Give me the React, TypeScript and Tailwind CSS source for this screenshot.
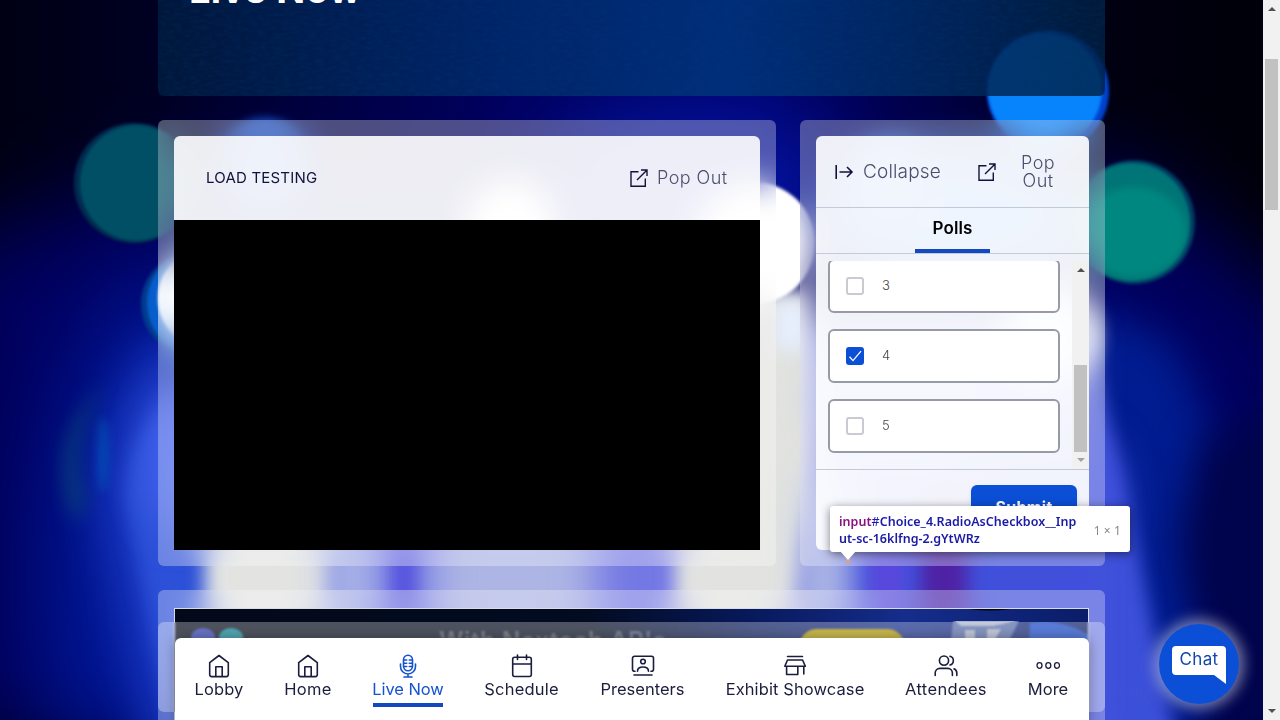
import type { ReactNode } from "react";

function Blur({ id, amount }: { id: string; amount: number }) {
  return (
    <filter id={id} filterUnits="userSpaceOnUse" x="-200" y="-200" width="1700" height="1200" colorInterpolationFilters="sRGB">
      <feGaussianBlur stdDeviation={amount} />
    </filter>
  );
}

function Backdrop() {
  return (
    <svg className="absolute inset-0 h-[720px] w-[1263px]" viewBox="0 0 1263 720" aria-hidden="true">
      <defs>
        <linearGradient id="base" x1="0" x2="1" y1="0" y2="0">
          <stop offset="0" stopColor="#000014" />
          <stop offset="0.12" stopColor="#000022" />
          <stop offset="0.26" stopColor="#000042" />
          <stop offset="0.4" stopColor="#000260" />
          <stop offset="0.6" stopColor="#000470" />
          <stop offset="0.75" stopColor="#000042" />
          <stop offset="0.88" stopColor="#000010" />
          <stop offset="1" stopColor="#00000a" />
        </linearGradient>
        <Blur id="b1" amount={1.5} />
        <Blur id="b4" amount={4} />
        <Blur id="b8" amount={9} />
        <Blur id="b20" amount={20} />
        <Blur id="b40" amount={42} />
      </defs>
      <rect width="1263" height="720" fill="url(#base)" />
      <path d="M-60 740V250L180 170H1130L1330 330V740Z" fill="#000060" filter="url(#b40)" />
      <path d="M60 740Q10 460 120 290L420 240V740Z" fill="#001796" filter="url(#b40)" />
      <ellipse cx="690" cy="190" rx="150" ry="80" fill="#0414a0" filter="url(#b40)" />
      <ellipse cx="960" cy="215" rx="120" ry="60" fill="#0a60e8" filter="url(#b20)" />
      <path d="M1080 300L1170 340L1215 430L1210 740H1080Z" fill="#001c90" filter="url(#b20)" />
      <path d="M1205 440 L1300 400 V740 H1225 Q1195 640 1180 540Z" fill="#00044c" filter="url(#b20)" />
      <path d="M160 340 Q100 400 95 490 Q110 600 155 760 L420 760 L420 340 Z" fill="#1634bc" filter="url(#b20)" />
      <path d="M190 380 Q125 430 125 500 L155 650 L185 760 L420 760 L420 380 Z" fill="#2c50d8" filter="url(#b8)" />
      <ellipse cx="180" cy="460" rx="30" ry="70" fill="#4563ee" filter="url(#b20)" />
      <path d="M1085 330 Q1112 430 1135 540 Q1155 640 1182 760 L700 760 L700 330 Z" fill="#3b50d8" filter="url(#b8)" />
      <rect x="300" y="330" width="780" height="430" fill="#7478e4" filter="url(#b20)" />
      <path d="M105 385 Q38 440 75 525 L88 500 Q66 450 105 385" fill="#08407a" opacity=".75" filter="url(#b8)" />
      <ellipse cx="103" cy="455" rx="6" ry="38" fill="#0058b8" opacity=".6" filter="url(#b4)" />
      <rect x="840" y="430" width="280" height="340" rx="60" fill="#4050db" filter="url(#b20)" />
      <rect x="205" y="420" width="125" height="340" rx="55" fill="#e3e4e2" filter="url(#b8)" />
      <rect x="330" y="420" width="45" height="340" fill="#b3bfe6" filter="url(#b20)" />
      <rect x="430" y="440" width="165" height="320" rx="50" fill="#adb5e4" filter="url(#b20)" />
      <rect x="392" y="500" width="24" height="260" fill="#5350dd" filter="url(#b8)" />
      <path d="M675 290H812Q832 440 802 540L780 760H675Z" fill="#e2e3e0" filter="url(#b8)" />
      <rect x="776" y="300" width="30" height="50" fill="#e6eeff" filter="url(#b8)" />
      <rect x="805" y="480" width="40" height="280" fill="#c2cde6" filter="url(#b20)" />
      <rect x="921" y="480" width="46" height="280" fill="#4f22a4" filter="url(#b8)" />
      <rect x="870" y="500" width="34" height="150" fill="#5a48dc" filter="url(#b8)" />
      <ellipse cx="905" cy="400" rx="80" ry="60" fill="#8e9ae6" filter="url(#b20)" />
      <circle cx="265" cy="166" r="48" fill="#1648bc" filter="url(#b4)" />
      <circle cx="510" cy="226" r="46" fill="#fff" filter="url(#b1)" />
      <ellipse cx="134" cy="183" rx="60" ry="60" fill="#002b50" filter="url(#b1)" />
      <ellipse cx="136" cy="183" rx="56" ry="58" fill="#004f65" filter="url(#b1)" />
      <circle cx="192" cy="304" r="51" fill="#003c8c" filter="url(#b1)" />
      <circle cx="200" cy="303" r="53" fill="#075dcc" filter="url(#b1)" />
      <circle cx="208" cy="298" r="50" fill="#fff" filter="url(#b1)" />
      <circle cx="1048" cy="91" r="61" fill="#0041cd" filter="url(#b1)" />
      <circle cx="1045" cy="90" r="57" fill="#0783fb" filter="url(#b1)" />
      <ellipse cx="1134" cy="222" rx="61" ry="62" fill="#003b62" filter="url(#b1)" />
      <ellipse cx="1132" cy="222" rx="58" ry="59" fill="#007476" filter="url(#b1)" />
      <ellipse cx="1134" cy="232" rx="52" ry="45" fill="#008880" filter="url(#b4)" />
      <circle cx="754" cy="243" r="61" fill="#fff" filter="url(#b1)" />
      <circle cx="890" cy="185" r="46" fill="#3068d8" filter="url(#b8)" />
      <ellipse cx="1050" cy="335" rx="48" ry="50" fill="#f8faff" filter="url(#b8)" />
    </svg>
  );
}

function Glyph({ children, className = "size-6" }: { children: ReactNode; className?: string }) {
  return (
    <svg viewBox="0 0 24 24" className={className} fill="none" stroke="currentColor" strokeWidth="1.6" strokeLinecap="round" strokeLinejoin="round">
      {children}
    </svg>
  );
}

const HomeIcon = () => (
  <Glyph><path d="M2.700 8.600 12 1.500l9.300 7.100v12a2 2 0 0 1-2 2H4.700a2 2 0 0 1-2-2zM8.800 22.500v-9.800h6.400v9.800" /></Glyph>
);
const MicIcon = () => (
  <Glyph>
    <rect x="7.500" y="1.200" width="9" height="15.500" rx="4.500" />
    <path d="M4.500 10v2.500a7.500 7.500 0 0 0 15 0V10M12 20v3M8 23h8M7.700 6h3m2.600 0h3M7.700 9.300h3m2.600 0h3M7.700 12.500h3m2.600 0h3" />
  </Glyph>
);
const CalendarIcon = () => (
  <Glyph><rect x="2.700" y="3.300" width="18.600" height="19.200" rx="2" /><path d="M2.700 10h18.600M7.500 1v4.500M16.500 1v4.500" /></Glyph>
);
const PresenterIcon = () => (
  <Glyph>
    <path d="M4 17.300h-.5a2 2 0 0 1-2-2v-11a2 2 0 0 1 2-2h17a2 2 0 0 1 2 2v11a2 2 0 0 1-2 2H20M3 21h18" />
    <circle cx="12" cy="7.500" r="2.300" /><path d="M6.500 17.300c0-3 2-4.300 5.500-4.300s5.500 1.300 5.500 4.300" />
  </Glyph>
);
const StoreIcon = () => (
  <Glyph><path d="M4.500 2.500h15M4.500 6h15.100l2.700 6.200H1.800zM3.600 12.500v8h11.200v-8M20.800 12.500v7.500" /></Glyph>
);
const PeopleIcon = () => (
  <Glyph>
    <circle cx="10" cy="6.600" r="4.600" />
    <path d="M1.200 21.500v-2.500a4.600 4.600 0 0 1 4.600-4.600h8a4.600 4.600 0 0 1 4.600 4.600v2.500M16 2.300a4.500 4.500 0 0 1 0 8.700M20 14.800a4.600 4.600 0 0 1 2.800 4.300v2.400" />
  </Glyph>
);
const DotsIcon = () => (
  <svg viewBox="0 0 24 24" className="size-6" fill="none" stroke="currentColor" strokeWidth="1.300">
    <ellipse cx="3.500" cy="11.500" rx="2.500" ry="2.800" /><ellipse cx="12.300" cy="11.500" rx="2.500" ry="2.800" /><ellipse cx="21" cy="11.500" rx="2.500" ry="2.800" />
  </svg>
);
const PopOutIcon = () => (
  <svg viewBox="0 0 20 20" className="size-5 text-[#12133a]" fill="none" stroke="currentColor" strokeWidth="1.400">
    <path d="M9.500 3.700H2v14.500h14.300V10.500M8 12 17.800 2.200M12 2h6v6" />
  </svg>
);
const CollapseIcon = () => (
  <svg viewBox="0 0 20 20" className="size-5 text-[#12133a]" fill="none" stroke="currentColor" strokeWidth="1.600">
    <path d="M2.200 3v14M5.500 10H18M13 5l5 5-5 5" />
  </svg>
);

const navItems = [
  { label: "Lobby", icon: <HomeIcon />, box: "w-12", track: "tracking-[0.100px]" },
  { label: "Home", icon: <HomeIcon />, box: "w-12", track: "tracking-[0.300px]" },
  { label: "Live Now", icon: <MicIcon />, box: "w-[70px]", track: "tracking-[-0.100px]", active: true },
  { label: "Schedule", icon: <CalendarIcon />, box: "w-[75px]", track: "tracking-[0.200px]" },
  { label: "Presenters", icon: <PresenterIcon />, box: "w-[85px]", track: "tracking-[0px]" },
  { label: "Exhibit Showcase", icon: <StoreIcon />, box: "w-[138px]", track: "tracking-[0.100px]" },
  { label: "Attendees", icon: <PeopleIcon />, box: "w-[82px]", track: "tracking-[0.350px]" },
  { label: "More", icon: <DotsIcon />, box: "w-10", track: "tracking-[0px]" },
];

function Triangle({ up = false, className = "" }: { up?: boolean; className?: string }) {
  return (
    <svg viewBox="0 0 8 4" className={`h-1 w-2 ${className}`} fill="currentColor">
      <path d={up ? "M0 4 4 0l4 4z" : "M0 0h8L4 4z"} />
    </svg>
  );
}

function Option({ label, checked = false }: { label: string; checked?: boolean }) {
  return (
    <div className="flex h-[54px] w-[232px] shrink-0 items-center gap-[18px] rounded-md border-2 border-[#979ba8] bg-white pl-4">
      <span className={`flex size-[18px] items-center justify-center rounded-[3px] ${checked ? "bg-[#0b4fd6]" : "border-2 border-[#c9cad2] bg-white"}`}>
        {checked && (
          <svg viewBox="0 0 18 18" className="size-[18px]" fill="none" stroke="white" strokeWidth="1.300"><path d="m3.500 9.800 3.500 3.800 8-9.500" /></svg>
        )}
      </span>
      <span className="text-[13px] font-light text-[#45464d]">{label}</span>
    </div>
  );
}

function PollPanel() {
  return (
    <section className="w-[305px] rounded-md bg-white/30 p-4 backdrop-blur-[16px]">
      <div className="flex h-[414px] flex-col overflow-hidden rounded-md bg-[#fdfeff]/92">
        <div className="flex h-[72px] items-center border-b border-[#c4cbd8] pl-[18px] text-lg leading-[18px] font-light text-[#4b4f6c]">
          <CollapseIcon />
          <span className="ml-[9px] w-[78px] text-[19px] tracking-[0.150px] whitespace-nowrap">Collapse</span>
          <span className="ml-9"><PopOutIcon /></span>
          <span className="ml-[17px] w-12 text-center tracking-[0.400px]">Pop Out</span>
        </div>
        <div className="flex h-[46px] justify-center border-b border-[#c4cbd8]">
          <div className="flex w-[75px] justify-center border-b-4 border-[#1249c0] text-[17px] leading-[40px] font-semibold tracking-[0.150px] text-black">Polls</div>
        </div>
        <div className="mt-[7px] flex h-[209px] justify-between overflow-hidden border-b border-[#c4c9d2] pl-3">
          <div className="-mt-0.5 flex flex-col gap-4">
            <Option label="3" />
            <Option label="4" checked />
            <Option label="5" />
          </div>
          <div className="flex w-[17px] flex-col items-center bg-[#f1f1f1]">
            <Triangle up className="mt-[7px] text-[#505050]" />
            <div className="mt-[93px] h-[87px] w-[13px] bg-[#c1c1c1]" />
            <Triangle className="mt-1.5 text-[#a3a3a3]" />
          </div>
        </div>
        <div className="flex justify-end px-3 pt-[15px]">
          <button className="h-12 w-[106px] rounded-md bg-[#0b4fd6] pb-1 text-base font-bold tracking-[0.300px] text-white shadow-md">Submit</button>
        </div>
      </div>
    </section>
  );
}

function StreamPanel() {
  return (
    <section className="w-[618px] rounded-md bg-white/30 p-4 backdrop-blur-[16px]">
      <div className="flex h-[414px] flex-col overflow-hidden rounded-t-md">
        <header className="flex h-[84px] items-center justify-between bg-white/90 px-8">
          <h2 className="text-[15px] tracking-[0.200px] text-[#12133a]">LOAD TESTING</h2>
          <div className="flex items-center gap-2 text-lg font-light text-[#4b4f6c]">
            <PopOutIcon />
            <span className="w-[71px] tracking-[0.450px] whitespace-nowrap">Pop Out</span>
          </div>
        </header>
        <div className="grow bg-black" />
      </div>
    </section>
  );
}

function Hero() {
  return (
    <section className="relative h-24 overflow-hidden rounded-b-md bg-[linear-gradient(90deg,rgba(0,25,60,.9),rgba(0,38,104,.94)_35%,rgba(0,48,122,.94)_60%,rgba(0,40,90,.85)_85%,rgba(0,32,66,.8))]">
      <svg className="absolute inset-0 h-full w-full opacity-25" aria-hidden="true">
        <filter id="wall"><feTurbulence type="fractalNoise" baseFrequency=".12 .3" numOctaves="3" seed="4" /><feColorMatrix values="0 0 0 0 0  0 0 0 0 0.05  0 0 0 0 .2  1.500 0 0 0 -.5" /></filter>
        <rect width="100%" height="100%" filter="url(#wall)" />
      </svg>
      <h1 className="relative -mt-[31px] pl-[31px] text-[38px] leading-10 font-bold tracking-[0.350px] text-white">Live Now</h1>
    </section>
  );
}

function Banner() {
  return (
    <section className="h-[130px] rounded-t-md bg-white/30 px-4 pt-[18px] backdrop-blur-[16px]">
      <div className="relative h-28 overflow-hidden border border-[#d8dce8] bg-[linear-gradient(90deg,#020919,#020b20_45%,#071858_62%,#152d8c_80%,#0a1d68)]">
        <svg viewBox="0 0 913 110" className="absolute inset-0 h-[110px] w-[913px]" aria-hidden="true">
          <ellipse cx="28" cy="28" rx="12" ry="9" fill="#2c38b0" />
          <ellipse cx="56" cy="28" rx="12" ry="9" fill="#068294" />
          <rect x="624" y="20" width="106" height="40" rx="18" fill="#b49c00" />
          <path d="M778 12h66l-10 20h-58z" fill="#5367a8" />
          <path d="M780 12h62l-24 5h-32zM790 21h10v12h-10zM812 20h14l-8 14h-6z" fill="#a9b4cc" />
          <path d="M855 14q35-4 58 12v30h-60z" fill="#1244c8" />
          <path d="M794 0h42q-20 3-42 0z" fill="#02030a" />
        </svg>
        <div className="relative pt-4 pl-[264px] text-[24px] leading-8 font-semibold tracking-[0.600px] text-white/30">With Nextech AR's</div>
      </div>
    </section>
  );
}

function NavBar() {
  return (
    <>
      <div className="absolute top-[622px] left-[158px] h-[90px] w-[947px] rounded-md bg-white/30 backdrop-blur-[1px]" />
      <nav className="absolute top-[638px] left-[175px] flex h-[90px] w-[914px] gap-[41px] rounded-t-md bg-white pt-4 pl-5 text-[16.500px] text-[#1b1d3c] shadow-[0_0_14px_rgba(0,0,0,.35)]">
        {navItems.map((item, i) => (
          <a key={i} className={`flex shrink-0 flex-col items-center ${item.box} ${item.active ? "text-[#1552cf]" : ""}`}>
            {item.icon}
            <span className={`-mt-px leading-6 whitespace-nowrap ${item.track}`}>{item.label}</span>
            {item.active && <span className="mt-0.5 h-1 w-full bg-[#1249c0]" />}
          </a>
        ))}
      </nav>
    </>
  );
}

function InspectTip() {
  return (
    <div className="absolute top-[506px] left-[830px] flex h-[46px] w-[300px] items-center justify-between rounded-[3px] bg-white px-[9px] font-['Noto_Sans',sans-serif] shadow-[0_2px_10px_rgba(0,0,0,.5)]">
      <div className="pt-0.5 text-[12.500px] leading-[17px] font-semibold tracking-[0.030px] whitespace-nowrap text-[#1a1aa6]">
        <div><span className="text-[#881280]">input</span><span className="font-normal">#</span>Choice_4.RadioAsCheckbox__Inp</div>
        <div>ut-sc-16klfng-2.gYtWRz</div>
      </div>
      <span className="pt-1 text-xs tracking-[0.100px] whitespace-nowrap text-[#85888e]">1 × 1</span>
      <svg viewBox="0 0 16 12" className="absolute top-[45px] left-2.5 h-3 w-4"><path d="M6 8h4v4H6z" fill="#d8a18a" /><path d="M0 0h16L8 9z" fill="white" /></svg>
    </div>
  );
}

function ChatButton() {
  return (
    <button className="absolute top-[624px] left-[1159px] size-20 rounded-full bg-[#0b4fd6] shadow-[0_0_14px_5px_rgba(210,215,235,.55)]">
      <svg viewBox="0 0 80 80" className="absolute inset-0 size-20"><path d="M17 22h46q4 0 4 4v34L55 51H17q-4 0-4-4V26q0-4 4-4z" fill="white" /></svg>
      <span className="relative block pb-2 text-[17px] tracking-[0.400px] text-[#1247ad]">Chat</span>
    </button>
  );
}

export default function App() {
  return (
    <div className="flex h-[720px] w-[1280px] overflow-hidden bg-[#000020] font-[Inter,'Liberation_Sans',sans-serif]">
      <main className="relative h-full w-[1263px] overflow-hidden">
        <Backdrop />
        <div className="mx-auto flex w-[947px] flex-col gap-6">
          <Hero />
          <div className="flex h-[446px] gap-6">
            <StreamPanel />
            <PollPanel />
          </div>
          <Banner />
        </div>
        <NavBar />
        <InspectTip />
        <ChatButton />
      </main>
      <aside className="flex w-[17px] flex-col items-center bg-[#f1f1f1]">
        <Triangle up className="mt-[7px] text-[#505050]" />
        <div className="mt-12 h-[151px] w-[13px] bg-[#c1c1c1]" />
        <Triangle className="mt-auto mb-[7px] text-[#505050]" />
      </aside>
    </div>
  );
}
